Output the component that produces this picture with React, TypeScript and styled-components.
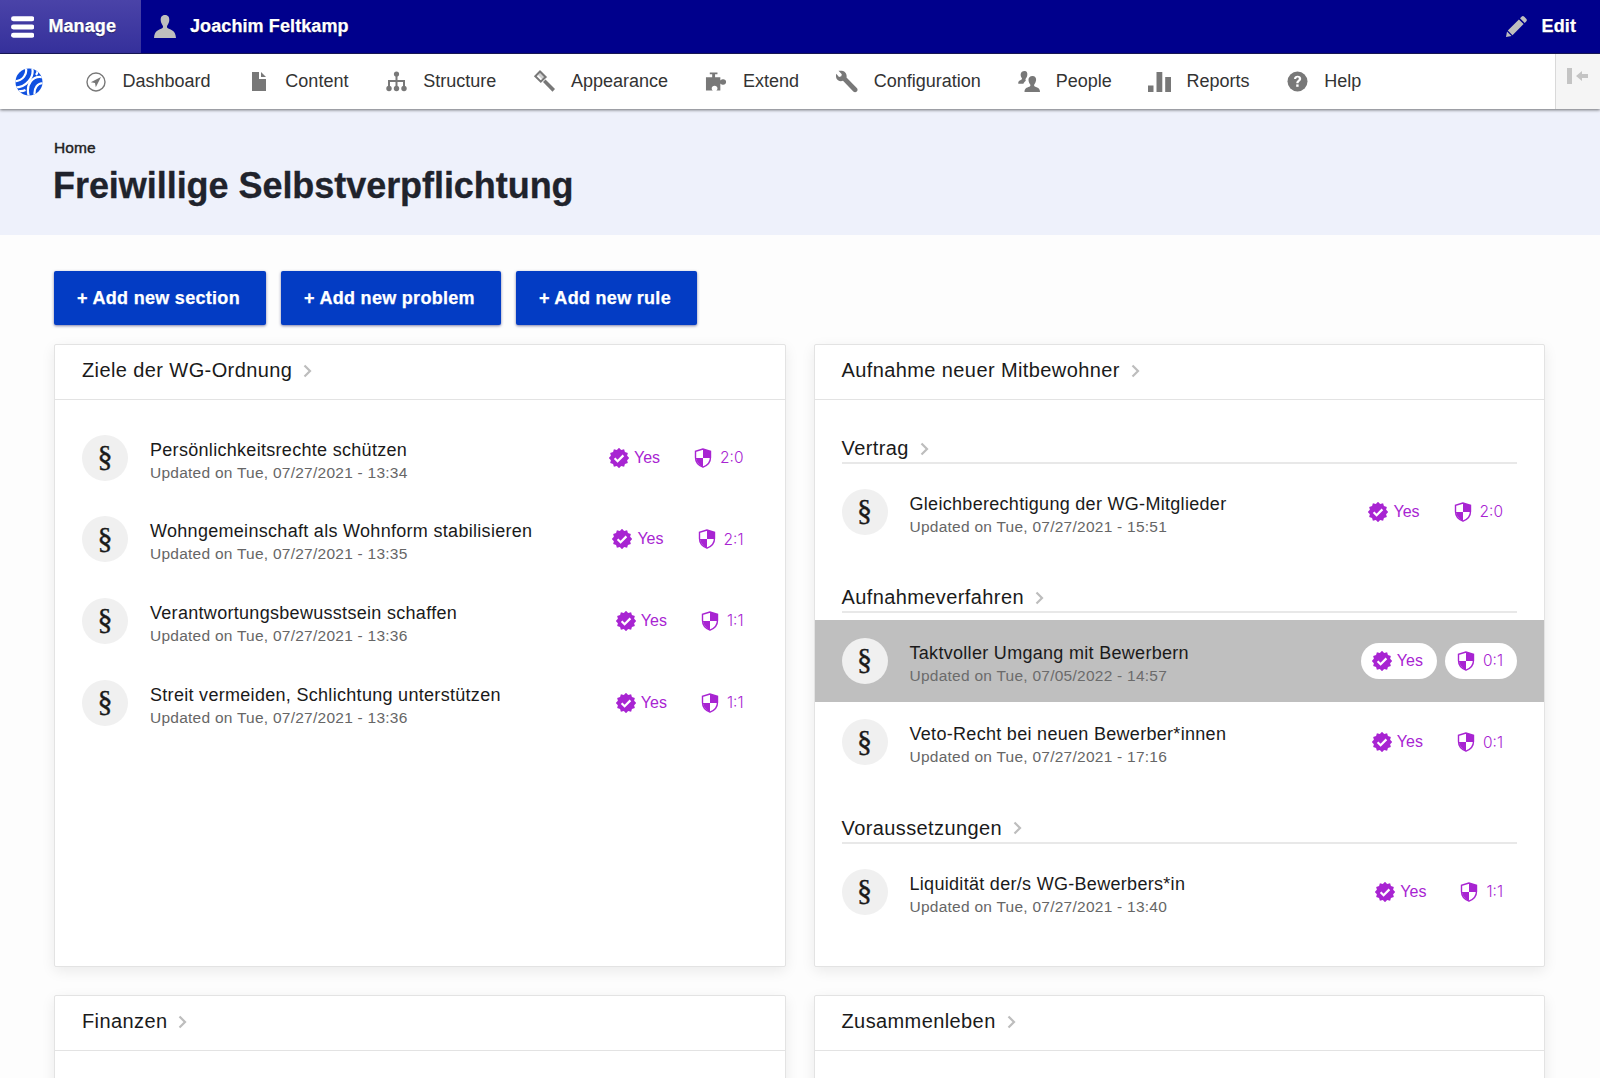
import React from 'react';
import styled, { createGlobalStyle } from 'styled-components';

const Global = createGlobalStyle`
  html, body { margin: 0; padding: 0; height: 100%; overflow: hidden; background: #fdfdfd; }
  * { box-sizing: border-box; }
  body { font-family: "Liberation Sans", Arial, sans-serif; color: #1a1a1a; }
`;

const Page = styled.div`
  height: 100vh;
  overflow: hidden;
`;

const TopBar = styled.header`
  height: 54px;
  background: #00008c;
  border-bottom: 1px solid #1a1a5c;
  display: flex;
  align-items: stretch;
  color: #fff;
  font-weight: 700;
  font-size: 18px;
  letter-spacing: 0.1px;
  -webkit-text-stroke: 0.25px #fff;
  text-shadow: 0 1px 1px rgba(0, 0, 0, 0.45);
`;

const TopTab = styled.div<{ $active?: boolean }>`
  display: flex;
  align-items: center;
  gap: 14px;
  padding: ${p => (p.$active ? '0 25px 0 11px' : '0 0 0 13px')};
  background: ${p => (p.$active ? 'linear-gradient(#4a43a8, #35309b)' : 'transparent')};
  width: ${p => (p.$active ? '141px' : 'auto')};
`;

const TopSpacer = styled.div`
  flex: 1;
`;

const EditTab = styled.div`
  display: flex;
  align-items: center;
  gap: 15px;
  padding-right: 24px;
`;

const NavBar = styled.nav`
  height: 55px;
  background: #fff;
  display: flex;
  align-items: center;
  box-shadow: 0 1px 3px rgba(0, 0, 0, 0.55);
  position: relative;
  z-index: 2;
`;

const Logo = styled.div`
  width: 84.5px;
  padding-left: 15px;
  display: flex;
  align-items: center;
`;

const NavItems = styled.div`
  display: flex;
  align-items: center;
  flex: 1;
  gap: 36.8px;
`;

const NavItem = styled.div`
  display: flex;
  align-items: center;
  gap: 15px;
  font-size: 18px;
  color: #333;
`;

const NavIconBox = styled.span`
  width: 23px;
  height: 26px;
  display: flex;
  align-items: center;
  justify-content: center;
  svg { display: block; }
`;

const Collapse = styled.div`
  width: 45px;
  height: 100%;
  background: #f5f5f5;
  border-left: 1px solid #d9d9d9;
  display: flex;
  align-items: flex-start;
  justify-content: center;
  padding-top: 14px;
`;

const PageHeader = styled.div`
  height: 126px;
  background: #eef1fb;
  padding: 30px 53px 0;
`;

const Breadcrumb = styled.div`
  font-size: 15.5px;
  line-height: 18px;
  font-weight: 400;
  letter-spacing: 0.1px;
  padding-left: 1px;
  color: #222;
  -webkit-text-stroke: 0.4px #222;
`;

const Title = styled.h1`
  margin: 6px 0 0;
  font-size: 36px;
  line-height: 46px;
  font-weight: 700;
  color: #20232c;
  letter-spacing: -0.05px;
  -webkit-text-stroke: 0.3px #20232c;
`;

const Content = styled.main`
  padding: 36px 0 0 54px;
`;

const Buttons = styled.div`
  display: flex;
  gap: 15px;
  margin-bottom: 19px;
`;

const Button = styled.button`
  height: 54px;
  padding: 1px 26px 0 23px;
  border: 0;
  border-radius: 2px;
  background: #033cc4;
  box-shadow: 0 1px 3px rgba(0, 0, 80, 0.5);
  color: #fff;
  font: 700 18px "Liberation Sans", Arial, sans-serif;
  letter-spacing: 0.3px;
  -webkit-text-stroke: 0.25px #fff;
`;

const Grid = styled.div`
  display: grid;
  grid-template-columns: 731.5px 731.5px;
  grid-auto-rows: min-content;
  gap: 28px;
`;

const Panel = styled.section`
  background: #fff;
  border: 1px solid #e3e3e3;
  border-radius: 2px;
  box-shadow: 0 4px 14px rgba(0, 0, 0, 0.08);
  min-height: 622px;
  display: flex;
  flex-direction: column;
`;

const PanelHead = styled.h2`
  margin: 0;
  height: 55px;
  padding: 0 27px 3px;
  border-bottom: 1px solid #e3e3e3;
  display: flex;
  align-items: center;
  gap: 11px;
  font-size: 20px;
  font-weight: 400;
  letter-spacing: 0.4px;
  color: #1a1a1a;
`;

const PanelBody = styled.div<{ $sections?: boolean }>`
  padding-top: ${p => (p.$sections ? '3px' : '17px')};
  padding-bottom: 34px;
`;

const Section = styled.div`
  margin-top: 29.5px;
  &:first-child { margin-top: 30px; }
`;

const SectionHead = styled.h3`
  margin: 0 27px 7px;
  height: 31px;
  padding-top: 2px;
  border-bottom: 2px solid #e8e8e8;
  display: flex;
  align-items: center;
  gap: 11px;
  font-size: 20px;
  font-weight: 400;
  letter-spacing: 0.4px;
  color: #1a1a1a;
`;

const Row = styled.div<{ $active?: boolean }>`
  height: 81.6px;
  padding: 0 27px;
  display: flex;
  align-items: center;
  background: ${p => (p.$active ? '#bfbfbf' : 'transparent')};
`;

const Para = styled.div`
  width: 46px;
  height: 46px;
  padding-bottom: 3px;
  border-radius: 50%;
  background: #f0f0f0;
  display: flex;
  align-items: center;
  justify-content: center;
  font: 400 30px "Liberation Serif", "Times New Roman", serif;
  -webkit-text-stroke: 0.4px #1a1a1a;
  color: #1a1a1a;
  flex: none;
`;

const RowText = styled.div`
  margin-left: 22px;
  padding-top: 6px;
  flex: 1;
  min-width: 0;
`;

const RowTitle = styled.div`
  font-size: 18px;
  line-height: 24px;
  letter-spacing: 0.3px;
  color: #1a1a1a;
`;

const RowMeta = styled.div<{ $active?: boolean }>`
  font-size: 15.5px;
  line-height: 22px;
  color: ${p => (p.$active ? '#6b6b6b' : '#666')};
  letter-spacing: 0.25px;
`;

const Pills = styled.div`
  display: flex;
  gap: 8px;
`;

const Pill = styled.div<{ $active?: boolean; $kind: 'yes' | 'score' }>`
  height: 36px;
  border-radius: 18px;
  padding: 0 14px 0 ${p => (p.$kind === 'yes' ? '11px' : '12px')};
  display: flex;
  align-items: center;
  gap: ${p => (p.$kind === 'yes' ? '5px' : '8px')};
  background: ${p => (p.$active ? '#fff' : 'transparent')};
  color: #a824d2;
  font-size: 16px;
`;

const ScoreText = styled.span`
  font: 300 15.5px Inter, "Liberation Sans", sans-serif;
`;

const Chevron = () => (
  <svg width="9" height="14" viewBox="0 0 9 14" fill="none">
    <path d="M1.500 1.500 7 7l-5.500 5.500" stroke="#bdbdbd" strokeWidth="2.200" />
  </svg>
);

const scallop = Array.from({ length: 24 }, (_, i) => {
  const r = i % 2 === 0 ? 10.2 : 8.4;
  const a = (Math.PI * i) / 12;
  return `${(10 + r * Math.sin(a)).toFixed(2)},${(10 - r * Math.cos(a)).toFixed(2)}`;
}).join(' ');

const VerifiedIcon = () => (
  <svg width="20" height="20" viewBox="0 0 20 20">
    <polygon fill="#a824d2" points={scallop} />
    <path d="M5.600 10.200l3 3 5.800-5.800" fill="none" stroke="#fff" strokeWidth="2.200" />
  </svg>
);

const ShieldIcon = () => (
  <svg width="18" height="20" viewBox="0 0 18 20">
    <path d="M9 1v9h7.300V3.300zM9 10H1.900c.6 4.200 3.300 7.100 7.100 9z" fill="#a824d2" />
    <path
      d="M9 1 1.500 3.300v6.200c0 4.700 3 7.900 7.500 9.700 4.500-1.800 7.500-5 7.500-9.700V3.300z"
      fill="none"
      stroke="#a824d2"
      strokeWidth="1.400"
    />
  </svg>
);

const G = '#787878';

const icons: Record<string, React.ReactNode> = {
  Dashboard: (
    <svg width="20" height="20" viewBox="0 0 20 20">
      <circle cx="10" cy="10" r="9" fill="none" stroke={G} strokeWidth="1.400" />
      <path d="M15 5 4.800 10.200l4.200.8.800 4.200z" fill={G} />
    </svg>
  ),
  Content: (
    <svg width="16" height="21" viewBox="0 0 16 21">
      <path d="M1 1h7v7h7v12H1z" fill={G} />
      <path d="M10 1l5 5h-5z" fill={G} />
    </svg>
  ),
  Structure: (
    <svg width="23" height="21" viewBox="0 0 23 21">
      <circle cx="11.500" cy="3" r="2.600" fill={G} />
      <path d="M10.500 4h2v5h7.500v7h-2v-5h-5.500v5h-2v-5H5v5H3V9h7.500z" fill={G} />
      <circle cx="4" cy="17.500" r="2.700" fill={G} />
      <circle cx="11.500" cy="17.500" r="2.700" fill={G} />
      <circle cx="19" cy="17.500" r="2.700" fill={G} />
    </svg>
  ),
  Appearance: (
    <svg width="23" height="23" viewBox="0 0 23 23">
      <path d="M7 1.500 12.500 7 7.800 11.700 2.300 6.200z" fill="none" stroke={G} strokeWidth="2" />
      <path d="M8 1l6.300 6.300-4 3L5 5z" fill={G} opacity=".35" />
      <path d="M10 12l2.500-2.500 9.500 9.500-2.500 2.800z" fill={G} />
    </svg>
  ),
  Extend: (
    <svg width="24" height="21" viewBox="0 0 24 21">
      <path
        fill={G}
        d="M5 1h8v2h-2.500v3H16v3.500c1.200-1.300 2.200-1.300 3-1.300 1.800 0 3 1.100 3 2.800 0 1.700-1.200 2.800-3 2.800-.8 0-1.800 0-3-1.300V20h-4.200c1-1 1.200-1.700 1.200-2.500 0-1.500-1.300-2.500-3-2.500s-3 1-3 2.500c0 .8.200 1.500 1.200 2.500H1V6h6.500V3H5z"
      />
    </svg>
  ),
  Configuration: (
    <svg width="23" height="23" viewBox="0 0 23 23">
      <path
        fill={G}
        d="M6 .8 2.500.8l3.300 3.500-.5 2L3 7 .3 3.700C-.5 6.500.2 9 2 10.300c1.500 1 3.300 1.100 5 .5l10.300 10.700c1 1 2.500 1 3.500 0s1-2.400 0-3.500L10.500 7.500c.4-2-.1-3.800-1.300-5C8.300 1.500 7.200 1 6 .8z"
      />
    </svg>
  ),
  People: (
    <svg width="23" height="23" viewBox="0 0 23 23">
      <path
        fill={G}
        d="M6.500 1C9 1 9.500 3 9.300 5c-.2 1.800-1 3-1.600 3.800-.3.500-.4 1.500.2 2-.9.600-2 1.500-2.500 3H.3c-.3-2 .5-3 2-3.600 1.500-.5 2-1.300 1.500-2.200C3 7 2.500 5.700 2.700 4 3 2 4.500 1 6.500 1z"
      />
      <path
        fill={G}
        d="M14.500 6c2.600 0 3.800 1.700 3.600 4-.2 2-1 3.300-1.700 4.200-.6.800-.4 2 .8 2.500 2.500 1 4.800 1.300 4.800 5.300H6.500c0-3.900 2.300-4.300 4.800-5.300 1.300-.5 1.400-1.700.8-2.500C11.300 13.300 10.600 12 10.500 10c-.2-2.300 1.400-4 4-4z"
      />
    </svg>
  ),
  Reports: (
    <svg width="23" height="21" viewBox="0 0 23 21">
      <rect x="0" y="14.500" width="5.500" height="6.500" fill={G} />
      <rect x="8.500" y="1" width="5.800" height="20" fill={G} />
      <rect x="17.200" y="6" width="5.800" height="15" fill={G} />
    </svg>
  ),
  Help: (
    <svg width="21" height="21" viewBox="0 0 21 21">
      <circle cx="10.500" cy="10.500" r="10" fill={G} />
      <path
        d="M7 8c.1-2 1.500-3.200 3.600-3.200S14.200 6 14.200 7.700c0 2.600-2.700 2.600-2.700 4.600H9.300c0-3 2.500-3.100 2.500-4.600 0-.7-.4-1.100-1.200-1.100-.9 0-1.300.6-1.400 1.400z"
        fill="#fff"
      />
      <rect x="9.200" y="13.400" width="2.400" height="2.400" fill="#fff" />
    </svg>
  ),
};

const navItems = ['Dashboard', 'Content', 'Structure', 'Appearance', 'Extend', 'Configuration', 'People', 'Reports', 'Help'];

type Item = { title: string; date: string; score: string; active?: boolean };

const RuleRow = ({ title, date, score, active }: Item) => (
  <Row $active={active}>
    <Para>§</Para>
    <RowText>
      <RowTitle>{title}</RowTitle>
      <RowMeta $active={active}>Updated on {date}</RowMeta>
    </RowText>
    <Pills>
      <Pill $active={active} $kind="yes">
        <VerifiedIcon />
        Yes
      </Pill>
      <Pill $active={active} $kind="score">
        <ShieldIcon />
        <ScoreText>{score}</ScoreText>
      </Pill>
    </Pills>
  </Row>
);

const leftItems: Item[] = [
  { title: 'Persönlichkeitsrechte schützen', date: 'Tue, 07/27/2021 - 13:34', score: '2:0' },
  { title: 'Wohngemeinschaft als Wohnform stabilisieren', date: 'Tue, 07/27/2021 - 13:35', score: '2:1' },
  { title: 'Verantwortungsbewusstsein schaffen', date: 'Tue, 07/27/2021 - 13:36', score: '1:1' },
  { title: 'Streit vermeiden, Schlichtung unterstützen', date: 'Tue, 07/27/2021 - 13:36', score: '1:1' },
];

const sections: { name: string; items: Item[] }[] = [
  {
    name: 'Vertrag',
    items: [{ title: 'Gleichberechtigung der WG-Mitglieder', date: 'Tue, 07/27/2021 - 15:51', score: '2:0' }],
  },
  {
    name: 'Aufnahmeverfahren',
    items: [
      { title: 'Taktvoller Umgang mit Bewerbern', date: 'Tue, 07/05/2022 - 14:57', score: '0:1', active: true },
      { title: 'Veto-Recht bei neuen Bewerber*innen', date: 'Tue, 07/27/2021 - 17:16', score: '0:1' },
    ],
  },
  {
    name: 'Voraussetzungen',
    items: [{ title: 'Liquidität der/s WG-Bewerbers*in', date: 'Tue, 07/27/2021 - 13:40', score: '1:1' }],
  },
];

export default function App() {
  return (
    <Page>
      <Global />
      <TopBar>
        <TopTab $active>
          <svg width="24" height="22" viewBox="0 0 24 22">
            <rect x="0" y="0" width="24" height="5" rx="2.500" fill="#fff" />
            <rect x="0" y="8.500" width="24" height="5" rx="2.500" fill="#fff" />
            <rect x="0" y="17" width="24" height="5" rx="2.500" fill="#fff" />
          </svg>
          Manage
        </TopTab>
        <TopTab>
          <svg width="22" height="23" viewBox="0 0 22 23">
            <path
              fill="#bebebe"
              d="M11 0c3.300 0 4.500 2.500 4.300 5.200-.2 2.500-1.200 4-2 5.200-.7 1.100-.4 2.600 1 3.200 3 1.300 7.200 2.200 7.700 9.400H0c.5-7.200 4.700-8.100 7.700-9.400 1.400-.6 1.700-2.100 1-3.200-.8-1.200-1.800-2.700-2-5.200C6.500 2.500 7.700 0 11 0z"
            />
          </svg>
          Joachim Feltkamp
        </TopTab>
        <TopSpacer />
        <EditTab>
          <svg width="21" height="21" viewBox="0 0 21 21">
            <path fill="#bebebe" d="M15.500.8a2 2 0 0 1 2.800 0l1.900 1.900a2 2 0 0 1 0 2.800l-1.500 1.500-4.700-4.700zM12.900 3.400l4.700 4.700L6.500 19.200 1.800 14.500zM1 15.500 5.500 20 0 21z" />
          </svg>
          Edit
        </EditTab>
      </TopBar>
      <NavBar>
        <Logo>
          <svg width="28" height="28" viewBox="0 0 28 28">
            <defs>
              <clipPath id="logo-disc">
                <circle cx="14" cy="14" r="13.500" />
              </clipPath>
            </defs>
            <g clipPath="url(#logo-disc)">
              <rect width="28" height="28" fill="#0f50e0" />
              <g fill="none" stroke="#fff" strokeWidth="2.200">
                <path d="M10.500 -1C13 6 8 13 -1 13.500" />
                <path d="M17 -1C20 9 11 20 -1 19.500" />
                <path d="M29 9.500C18 6.500 10 16 14 29" />
                <path d="M29 15.500C23 14 18 20 20 29" />
                <path d="M22 0.500C23 3 22.500 5 21 7" />
                <path d="M4 23C6.500 23.500 8.500 23 10.500 22" />
              </g>
            </g>
          </svg>
        </Logo>
        <NavItems>
          {navItems.map(n => (
            <NavItem key={n}>
              <NavIconBox>{icons[n]}</NavIconBox>
              {n}
            </NavItem>
          ))}
        </NavItems>
        <Collapse>
          <svg width="22" height="16" viewBox="0 0 22 16">
            <rect x="0" y="0" width="5" height="16" fill="#c4c4c4" />
            <path d="M9 8l6-5v3h6v4h-6v3z" fill="#c4c4c4" />
          </svg>
        </Collapse>
      </NavBar>
      <PageHeader>
        <Breadcrumb>Home</Breadcrumb>
        <Title>Freiwillige Selbstverpflichtung</Title>
      </PageHeader>
      <Content>
        <Buttons>
          <Button>+ Add new section</Button>
          <Button>+ Add new problem</Button>
          <Button>+ Add new rule</Button>
        </Buttons>
        <Grid>
          <Panel>
            <PanelHead>
              Ziele der WG-Ordnung <Chevron />
            </PanelHead>
            <PanelBody>
              {leftItems.map(i => (
                <RuleRow key={i.title} {...i} />
              ))}
            </PanelBody>
          </Panel>
          <Panel>
            <PanelHead>
              Aufnahme neuer Mitbewohner <Chevron />
            </PanelHead>
            <PanelBody $sections>
              {sections.map(s => (
                <Section key={s.name}>
                  <SectionHead>
                    {s.name} <Chevron />
                  </SectionHead>
                  {s.items.map(i => (
                    <RuleRow key={i.title} {...i} />
                  ))}
                </Section>
              ))}
            </PanelBody>
          </Panel>
          <Panel>
            <PanelHead>
              Finanzen <Chevron />
            </PanelHead>
          </Panel>
          <Panel>
            <PanelHead>
              Zusammenleben <Chevron />
            </PanelHead>
          </Panel>
        </Grid>
      </Content>
    </Page>
  );
}
